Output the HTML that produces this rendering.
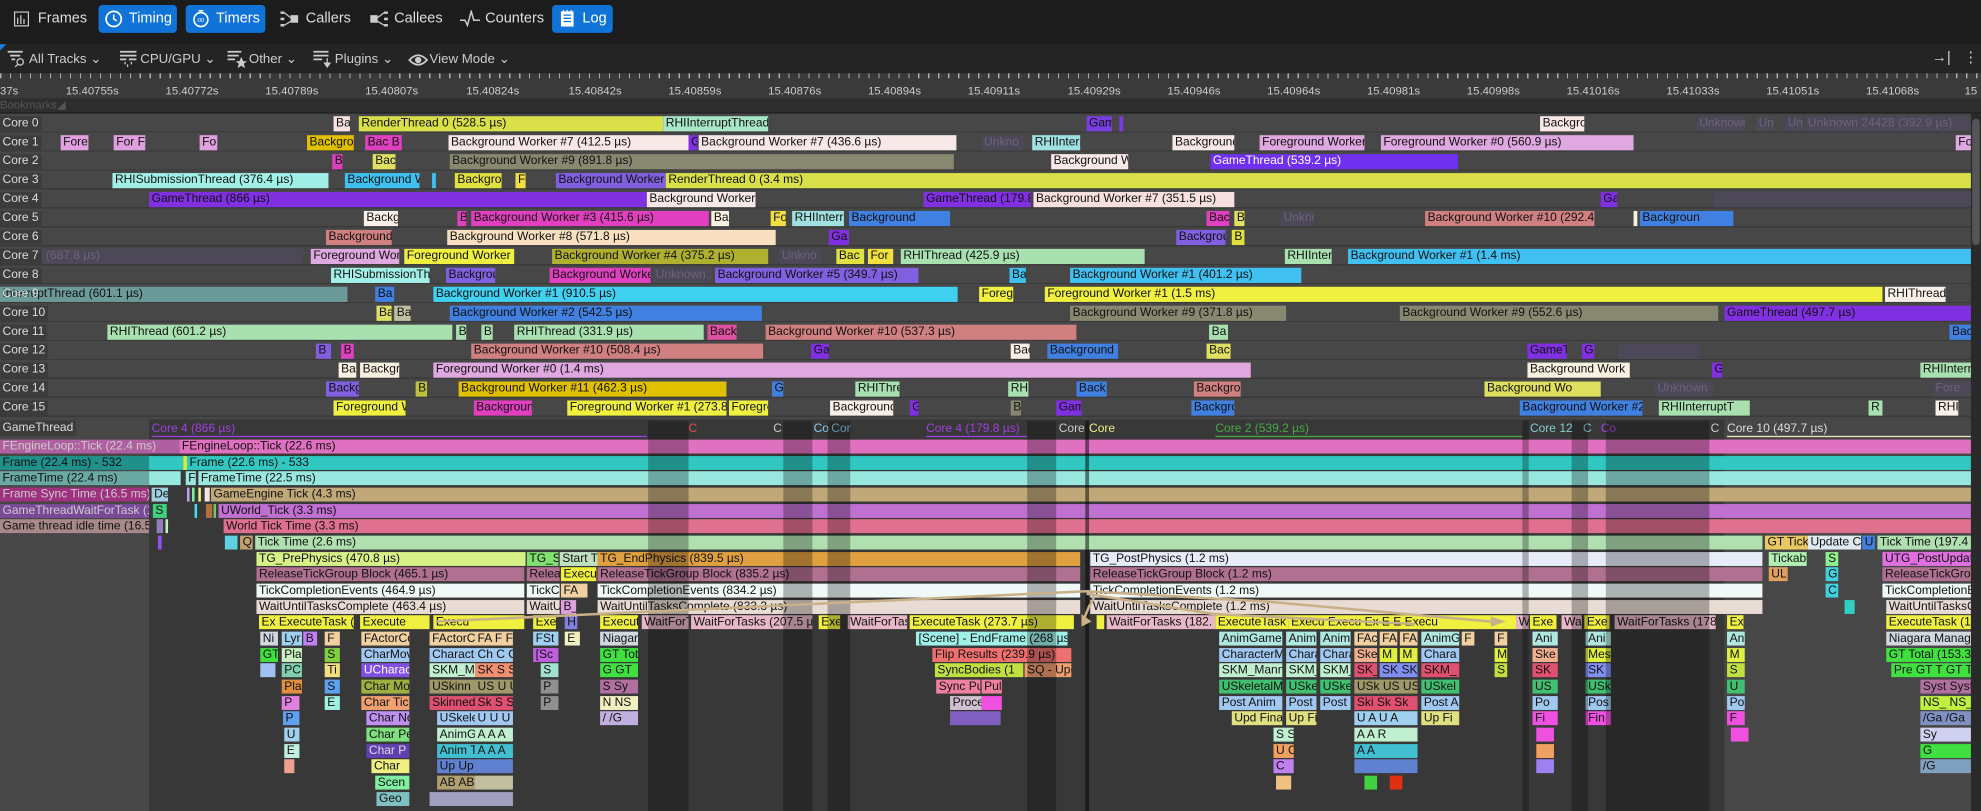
<!DOCTYPE html>
<html><head><meta charset="utf-8">
<style>
html,body{margin:0;padding:0;width:1981px;height:811px;overflow:hidden;background:#1c1c1c}
#c{position:absolute;left:0;top:0;width:1568px;height:642px;transform:scale(1.26339,1.2633);transform-origin:0 0;font-family:"Liberation Sans Narrow","Liberation Sans",sans-serif;overflow:hidden;background:#1c1c1c}
.a{position:absolute}
.b{position:absolute;height:11px;font-size:9.5px;line-height:11px;color:#111;overflow:hidden;white-space:nowrap;padding-left:2px;box-sizing:border-box}
.r{position:absolute;left:0;width:1560px;height:12px}
.r .b{top:0;height:12px;line-height:12px}
.d{color:#6a6478 !important;background:#4d4858}
.lbl{position:absolute;left:0;top:0;height:12px;line-height:12px;font-size:9.5px;color:#ddd;background:#3c3c3c;padding:0 2px}
.g{position:absolute;left:0;width:1560px;height:11px}
.tab{position:absolute;top:4px;height:22px;border-radius:3px;color:#ddd;font-size:11.5px;line-height:22px;padding-left:24px;box-sizing:border-box}
.tb{background:#1073d8;color:#fff}
.tl{position:absolute;top:39px;color:#ccc;font-size:10.5px;line-height:16px}
.rl{position:absolute;top:67px;color:#ccc;font-size:9px}
.ov{position:absolute;top:333px;height:309px;background:rgba(0,0,0,.28)}
</style></head><body><div id="c">
<!-- top bar -->
<div class="a" style="left:0;top:0;width:1568px;height:34px;background:#1c1c1c"></div>
<div class="tab" style="left:6px;width:64px">Frames</div>
<svg class="a" style="left:11px;top:9px" width="12" height="12"><rect x="0.5" y="0.5" width="11" height="11" fill="none" stroke="#ccc"/><path d="M3 10V5M5.5 10V3M8 10V6" stroke="#ccc"/></svg>
<div class="tab tb" style="left:78px;width:62px">Timing</div>
<svg class="a" style="left:83px;top:8px" width="14" height="14"><circle cx="7" cy="7" r="6" fill="none" stroke="#fff" stroke-width="1.4"/><path d="M7 3.5V7L9.5 8.5" stroke="#fff" fill="none" stroke-width="1.2"/></svg>
<div class="tab tb" style="left:147px;width:63px">Timers</div>
<svg class="a" style="left:152px;top:7px" width="14" height="15"><circle cx="7" cy="8.5" r="5.5" fill="none" stroke="#fff" stroke-width="1.3"/><path d="M5 1.5H9M7 1.5V3" stroke="#fff"/><text x="3.5" y="10.5" font-size="4.5" fill="#fff">:00</text></svg>
<div class="tab" style="left:218px;width:64px">Callers</div>
<svg class="a" style="left:222px;top:9px" width="15" height="12"><rect x="8" y="3" width="6" height="6" fill="#ccc"/><rect x="0" y="0" width="3" height="2" fill="#ccc"/><rect x="0" y="5" width="3" height="2" fill="#ccc"/><rect x="0" y="10" width="3" height="2" fill="#ccc"/><path d="M3 1L8 5M3 11L8 8" stroke="#ccc"/></svg>
<div class="tab" style="left:288px;width:64px">Callees</div>
<svg class="a" style="left:293px;top:9px" width="15" height="12"><rect x="0" y="3" width="6" height="6" fill="#ccc"/><rect x="11" y="0" width="3" height="2" fill="#ccc"/><rect x="11" y="5" width="3" height="2" fill="#ccc"/><rect x="11" y="10" width="3" height="2" fill="#ccc"/><path d="M6 5L11 1M6 8L11 11" stroke="#ccc"/></svg>
<div class="tab" style="left:360px;width:72px">Counters</div>
<svg class="a" style="left:364px;top:8px" width="16" height="14"><path d="M0 8H4L6 12L9 1L11 8H16" stroke="#ccc" fill="none" stroke-width="1.2"/></svg>
<div class="tab tb" style="left:437px;width:48px">Log</div>
<svg class="a" style="left:443px;top:7px" width="12" height="15"><rect x="1" y="2" width="10" height="12" fill="#fff"/><path d="M3 5H9M3 7.5H9M3 10H9" stroke="#1073d8"/><path d="M3 1V3M6 1V3M9 1V3" stroke="#fff"/></svg>
<!-- toolbar -->
<div class="a" style="left:0;top:35px;width:1568px;height:23px;background:#242424"></div>
<div class="a" style="left:0;top:35px;width:0;height:0;border-top:5px solid #1a7ee0;border-right:5px solid transparent"></div>
<svg class="a" style="left:6px;top:40px" width="16" height="14"><path d="M0 1H12M2 4H10M3 7H6" stroke="#ccc" stroke-width="1.4"/><circle cx="10" cy="9" r="2.5" fill="none" stroke="#ccc"/><path d="M8 11L6 13" stroke="#ccc"/></svg>
<div class="tl" style="left:23px">All Tracks ⌄</div>
<svg class="a" style="left:95px;top:40px" width="14" height="14"><path d="M0 1H13M0 4H13M0 7H5M7 7H13" stroke="#ccc" stroke-width="1.4"/><path d="M4 9V11M9 9V11M6 11V13" stroke="#ccc"/></svg>
<div class="tl" style="left:111px">CPU/GPU ⌄</div>
<svg class="a" style="left:180px;top:40px" width="16" height="14"><path d="M0 1H11M0 4H9M0 7H6" stroke="#ccc" stroke-width="1.4"/><path d="M11 5L12.5 8.5H15.5L13 10.5L14 14L11 12L8 14L9 10.5L6.5 8.5H9.5Z" fill="#ccc"/></svg>
<div class="tl" style="left:197px">Other ⌄</div>
<svg class="a" style="left:248px;top:40px" width="16" height="14"><path d="M0 1H12M0 4H12M0 7H7" stroke="#ccc" stroke-width="1.4"/><path d="M11 6V11M8.5 9.5L11 13L13.5 9.5" stroke="#ccc" fill="#ccc"/></svg>
<div class="tl" style="left:265px">Plugins ⌄</div>
<svg class="a" style="left:323px;top:42px" width="16" height="11"><path d="M1 5.5Q8 -2 15 5.5Q8 13 1 5.5Z" fill="none" stroke="#ccc" stroke-width="1.4"/><circle cx="8" cy="5.5" r="2.5" fill="#ccc"/></svg>
<div class="tl" style="left:340px">View Mode ⌄</div>
<div class="a" style="left:1529px;top:38px;color:#ccc;font-size:12px">→|</div>
<div class="a" style="left:1554px;top:38px;color:#ccc;font-size:12px">⋮</div>
<!-- ruler -->
<div class="a" style="left:0;top:58px;width:1568px;height:20px;background:#3a3a3a;background-image:repeating-linear-gradient(90deg,#aaa 0 1px,transparent 1px 7.9px);background-size:100% 4px;background-repeat:no-repeat"></div>
<div class="rl" style="left:0">37s</div><div class="rl" style="left:52px">15.40755s</div><div class="rl" style="left:131px">15.40772s</div><div class="rl" style="left:210px">15.40789s</div><div class="rl" style="left:289px">15.40807s</div><div class="rl" style="left:369px">15.40824s</div><div class="rl" style="left:450px">15.40842s</div><div class="rl" style="left:529px">15.40859s</div><div class="rl" style="left:608px">15.40876s</div><div class="rl" style="left:687px">15.40894s</div><div class="rl" style="left:766px">15.40911s</div><div class="rl" style="left:845px">15.40929s</div><div class="rl" style="left:924px">15.40946s</div><div class="rl" style="left:1003px">15.40964s</div><div class="rl" style="left:1082px">15.40981s</div><div class="rl" style="left:1161px">15.40998s</div><div class="rl" style="left:1240px">15.41016s</div><div class="rl" style="left:1319px">15.41033s</div><div class="rl" style="left:1398px">15.41051s</div><div class="rl" style="left:1477px">15.41068s</div><div class="rl" style="left:1555px">15</div>
<div class="a" style="left:0;top:78px;width:1568px;height:11px;background:#2e2e2e;color:#555;font-size:9px;line-height:11px">Bookmarks◢</div>
<!-- core area -->
<div class="a" style="left:0;top:90px;width:1568px;height:243px;background:#474747;background-image:repeating-linear-gradient(180deg,#474747 0 14px,#3a3a3a 14px 15px)"></div>
<div class="a" style="left:1560px;top:90px;width:8px;height:552px;background:#2a2a2a"></div>
<div class="a" style="left:1561px;top:94px;width:6px;height:100px;background:#555;border-radius:3px"></div>

<div class="r" style="top:92px"><div class="lbl">Core 0</div><div class="b" style="left:264px;width:13px;background:#f8e0e0">Ba</div><div class="b" style="left:284px;width:241px;background:#d9e04a">RenderThread 0 (528.5 µs)</div><div class="b" style="left:525px;width:83px;background:#a8e6c8">RHIInterruptThread (</div><div class="b" style="left:860px;width:20px;background:#7a3ee0">Gam</div><div class="b" style="left:886px;width:3px;background:#7a3ee0"></div><div class="b" style="left:1219px;width:35px;background:#f8e8e8">Backgro</div><div class="b d" style="left:1343px;width:38px">Unknown</div><div class="b d" style="left:1390px;width:14px">Un</div><div class="b d" style="left:1413px;width:14px">Un</div><div class="b d" style="left:1429px;width:131px">Unknown 24428 (392.9 µs)</div></div>
<div class="r" style="top:107px"><div class="lbl">Core 1</div><div class="b" style="left:48px;width:22px;background:#e0a0e0">Fore</div><div class="b" style="left:90px;width:25px;background:#e0a0e0">For F</div><div class="b" style="left:158px;width:14px;background:#e0a0e0">Fo</div><div class="b" style="left:243px;width:37px;background:#e0c000">Backgro</div><div class="b" style="left:289px;width:29px;background:#e040c0">Bac B</div><div class="b" style="left:355px;width:190px;background:#f8e8e8">Background Worker #7 (412.5 µs)</div><div class="b" style="left:545px;width:7px;background:#8030e0">G</div><div class="b" style="left:553px;width:204px;background:#f8e8e8">Background Worker #7 (436.6 µs)</div><div class="b d" style="left:777px;width:33px">Unkno</div><div class="b" style="left:817px;width:38px;background:#a0e0e0">RHIInterr</div><div class="b" style="left:928px;width:49px;background:#f8e8e8">Background</div><div class="b" style="left:997px;width:83px;background:#e0a8e0">Foreground Worker #</div><div class="b" style="left:1093px;width:200px;background:#e0a8e0">Foreground Worker #0 (560.9 µs)</div><div class="b" style="left:1548px;width:12px;background:#e0a8e0">Fore</div></div>
<div class="r" style="top:122px"><div class="lbl">Core 2</div><div class="b" style="left:263px;width:8px;background:#e040c0">B</div><div class="b" style="left:295px;width:18px;background:#e0e060">Bac</div><div class="b" style="left:356px;width:399px;background:#888870">Background Worker #9 (891.8 µs)</div><div class="b" style="left:832px;width:61px;background:#f8e8e8">Background W</div><div class="b" style="left:958px;width:196px;background:#7030f0;color:#fff">GameThread (539.2 µs)</div></div>
<div class="r" style="top:137px"><div class="lbl">Core 3</div><div class="b" style="left:89px;width:171px;background:#a0f0e8">RHISubmissionThread (376.4 µs)</div><div class="b" style="left:273px;width:59px;background:#40c0f0">Background W</div><div class="b" style="left:342px;width:3px;background:#40c0f0"></div><div class="b" style="left:360px;width:37px;background:#e0e040">Backgro</div><div class="b" style="left:408px;width:8px;background:#f0e040">F</div><div class="b" style="left:440px;width:87px;background:#8060e0">Background Worker #</div><div class="b" style="left:527px;width:1033px;background:#d9e04a">RenderThread 0 (3.4 ms)</div></div>
<div class="r" style="top:152px"><div class="lbl">Core 4</div><div class="b" style="left:118px;width:394px;background:#8030e0">GameThread (866 µs)</div><div class="b" style="left:512px;width:86px;background:#f8e8e8">Background Worker (</div><div class="b" style="left:731px;width:85px;background:#8030e0">GameThread (179.8</div><div class="b" style="left:818px;width:159px;background:#f8e0e0">Background Worker #7 (351.5 µs)</div><div class="b" style="left:1267px;width:13px;background:#8030e0">Ga</div><div class="b d" style="left:1356px;width:204px"></div></div>
<div class="r" style="top:167px"><div class="lbl">Core 5</div><div class="b" style="left:288px;width:27px;background:#f8f0e8">Backg</div><div class="b" style="left:362px;width:7px;background:#e040c0">B</div><div class="b" style="left:373px;width:188px;background:#e040c0">Background Worker #3 (415.6 µs)</div><div class="b" style="left:563px;width:14px;background:#f8f0e0">Ba</div><div class="b" style="left:610px;width:12px;background:#f0e040">Fo</div><div class="b" style="left:627px;width:41px;background:#a0e0e0">RHIInterr</div><div class="b" style="left:672px;width:80px;background:#4080e0">Background</div><div class="b" style="left:955px;width:18px;background:#e040c0">Bac</div><div class="b" style="left:977px;width:8px;background:#e0e060">B</div><div class="b d" style="left:1014px;width:26px">Unkno</div><div class="b" style="left:1128px;width:134px;background:#d08080">Background Worker #10 (292.4 µs)</div><div class="b" style="left:1293px;width:3px;background:#f8f0e0"></div><div class="b" style="left:1298px;width:74px;background:#4080e0">Backgroun</div></div>
<div class="r" style="top:182px"><div class="lbl">Core 6</div><div class="b" style="left:258px;width:52px;background:#d08080">Background</div><div class="b" style="left:354px;width:260px;background:#f8e0c0">Background Worker #8 (571.8 µs)</div><div class="b" style="left:656px;width:16px;background:#8030e0">Ga</div><div class="b" style="left:931px;width:39px;background:#8060e0">Backgrou</div><div class="b" style="left:975px;width:10px;background:#e0e040">B</div></div>
<div class="r" style="top:197px"><div class="b d" style="left:0;width:240px">m 1092 (687.8 µs)</div><div class="lbl">Core 7</div><div class="b" style="left:246px;width:70px;background:#e0a8e0">Foreground Work</div><div class="b" style="left:320px;width:87px;background:#f0f040">Foreground Worker #</div><div class="b" style="left:437px;width:171px;background:#b0b030">Background Worker #4 (375.2 µs)</div><div class="b d" style="left:617px;width:33px">Unkno</div><div class="b" style="left:662px;width:22px;background:#e0e040">Bac</div><div class="b" style="left:687px;width:20px;background:#f0e040">For</div><div class="b" style="left:713px;width:193px;background:#a8e0b0">RHIThread (425.9 µs)</div><div class="b" style="left:1017px;width:37px;background:#a8e0b0">RHIInter</div><div class="b" style="left:1067px;width:493px;background:#40c0f0">Background Worker #1 (1.4 ms)</div></div>
<div class="r" style="top:212px"><div class="lbl">Core 8</div><div class="b" style="left:262px;width:78px;background:#a0f0e8">RHISubmissionThre</div><div class="b" style="left:353px;width:39px;background:#8060e0">Backgrou</div><div class="b" style="left:435px;width:80px;background:#e040c0">Background Worker</div><div class="b d" style="left:517px;width:46px">Unknown 12</div><div class="b" style="left:566px;width:161px;background:#8060e0">Background Worker #5 (349.7 µs)</div><div class="b" style="left:799px;width:13px;background:#40c0f0">Ba</div><div class="b" style="left:847px;width:183px;background:#40c0f0">Background Worker #1 (401.2 µs)</div></div>
<div class="r" style="top:227px"><div class="b" style="left:0;width:275px;background:#6c9a98">InterruptThread (601.1 µs)</div><div class="lbl" style="background:none">Core 9</div><div class="b" style="left:297px;width:15px;background:#4080e0">Ba</div><div class="b" style="left:343px;width:415px;background:#40d0f0">Background Worker #1 (910.5 µs)</div><div class="b" style="left:775px;width:27px;background:#f0f040">Foregr</div><div class="b" style="left:827px;width:663px;background:#f0f040">Foreground Worker #1 (1.5 ms)</div><div class="b" style="left:1492px;width:48px;background:#f8f0e8">RHIThread</div></div>
<div class="r" style="top:242px"><div class="lbl">Core 10</div><div class="b" style="left:298px;width:12px;background:#e0e060">Ba</div><div class="b" style="left:312px;width:13px;background:#c0c0a0">Ba</div><div class="b" style="left:356px;width:247px;background:#4080e0">Background Worker #2 (542.5 µs)</div><div class="b" style="left:847px;width:171px;background:#888870">Background Worker #9 (371.8 µs)</div><div class="b" style="left:1108px;width:252px;background:#888870">Background Worker #9 (552.6 µs)</div><div class="b" style="left:1365px;width:195px;background:#8030e0">GameThread (497.7 µs)</div></div>
<div class="r" style="top:257px"><div class="lbl">Core 11</div><div class="b" style="left:85px;width:273px;background:#a8e0b0">RHIThread (601.2 µs)</div><div class="b" style="left:361px;width:8px;background:#a8e0b0">B</div><div class="b" style="left:381px;width:9px;background:#a8e0b0">B</div><div class="b" style="left:407px;width:150px;background:#a8e0b0">RHIThread (331.9 µs)</div><div class="b" style="left:560px;width:23px;background:#e050a0">Back</div><div class="b" style="left:606px;width:246px;background:#d08080">Background Worker #10 (537.3 µs)</div><div class="b" style="left:957px;width:15px;background:#a8e0b0">Ba</div><div class="b" style="left:1543px;width:17px;background:#4080e0">Bac</div></div>
<div class="r" style="top:272px"><div class="lbl">Core 12</div><div class="b" style="left:250px;width:12px;background:#8060e0">B</div><div class="b" style="left:270px;width:10px;background:#e040c0">B</div><div class="b" style="left:373px;width:231px;background:#d08080">Background Worker #10 (508.4 µs)</div><div class="b" style="left:642px;width:14px;background:#8030e0">Ga</div><div class="b" style="left:800px;width:15px;background:#f8f0e8">Bac</div><div class="b" style="left:829px;width:56px;background:#4080e0">Background</div><div class="b" style="left:955px;width:19px;background:#e0e060">Bac</div><div class="b" style="left:1209px;width:31px;background:#8030e0">GameT</div><div class="b" style="left:1252px;width:10px;background:#8030e0">G</div><div class="b d" style="left:1281px;width:64px"></div></div>
<div class="r" style="top:287px"><div class="lbl">Core 13</div><div class="b" style="left:268px;width:14px;background:#f8f0e0">Ba</div><div class="b" style="left:285px;width:31px;background:#f8f0e0">Backgr</div><div class="b" style="left:343px;width:647px;background:#e0a8e0">Foreground Worker #0 (1.4 ms)</div><div class="b" style="left:1209px;width:81px;background:#f8f0e0">Background Work</div><div class="b" style="left:1355px;width:8px;background:#8030e0">G</div><div class="b" style="left:1520px;width:40px;background:#a8e0b0">RHIInterr</div></div>
<div class="r" style="top:302px"><div class="lbl">Core 14</div><div class="b" style="left:258px;width:26px;background:#8060e0">Backg</div><div class="b" style="left:329px;width:9px;background:#c0c040">B</div><div class="b" style="left:363px;width:212px;background:#e0c000">Background Worker #11 (462.3 µs)</div><div class="b" style="left:611px;width:9px;background:#4080e0">G</div><div class="b" style="left:677px;width:35px;background:#a8e0b0">RHIThre</div><div class="b" style="left:798px;width:16px;background:#a8e0b0">RH</div><div class="b" style="left:852px;width:24px;background:#4080e0">Back</div><div class="b" style="left:945px;width:37px;background:#d08080">Backgro</div><div class="b" style="left:1175px;width:92px;background:#e0e060">Background Wo</div><div class="b d" style="left:1310px;width:46px">Unknown</div><div class="b d" style="left:1530px;width:30px">Fore</div></div>
<div class="r" style="top:317px"><div class="lbl">Core 15</div><div class="b" style="left:264px;width:57px;background:#f0f040">Foreground W</div><div class="b" style="left:375px;width:46px;background:#e040c0">Backgroun</div><div class="b" style="left:449px;width:126px;background:#f0f040">Foreground Worker #1 (273.8 µs)</div><div class="b" style="left:577px;width:31px;background:#f0f040">Foregro</div><div class="b" style="left:657px;width:50px;background:#f8f0e8">Background</div><div class="b" style="left:720px;width:7px;background:#8030e0">G</div><div class="b" style="left:800px;width:8px;background:#888870">B</div><div class="b" style="left:836px;width:20px;background:#8030e0">Gam</div><div class="b" style="left:943px;width:34px;background:#4080e0">Backgro</div><div class="b" style="left:1203px;width:97px;background:#4080e0">Background Worker #2 (</div><div class="b" style="left:1313px;width:72px;background:#a8e0b0">RHIInterruptT</div><div class="b" style="left:1479px;width:11px;background:#a8e0b0">R</div><div class="b" style="left:1532px;width:18px;background:#f8f0e8">RHI</div></div>

<!-- GameThread area -->
<div class="a" style="left:0;top:332px;width:1560px;height:310px;background:#383838"></div>
<div class="a" style="left:0;top:332px;width:118px;height:310px;background:#474747"></div>
<div class="a" style="left:1365px;top:332px;width:195px;height:310px;background:#474747"></div>
<div class="a" style="left:0;top:333px;height:12px;line-height:12px;font-size:9.5px;color:#ddd;background:#3c3c3c;padding:0 2px">GameThread</div>
<div class="a" style="left:120px;top:334px;font-size:9.5px;color:#a040e0">Core 4 (866 µs)</div>
<div class="a" style="left:120px;top:345px;width:392px;height:1px;background:#a040e0"></div>
<div class="a" style="left:545px;top:334px;font-size:9.5px;color:#e05050">C</div>
<div class="a" style="left:612px;top:334px;font-size:9.5px;color:#ccc">C</div>
<div class="a" style="left:644px;top:334px;font-size:9.5px;color:#8ce">Co</div><div class="a" style="left:658px;top:334px;font-size:9.5px;color:#8ce">Cor</div>
<div class="a" style="left:733px;top:334px;font-size:9.5px;color:#a040e0">Core 4 (179.8 µs)</div>
<div class="a" style="left:733px;top:345px;width:80px;height:1px;background:#a040e0"></div>
<div class="a" style="left:838px;top:334px;font-size:9.5px;color:#ccc">Core</div><div class="a" style="left:862px;top:334px;font-size:9.5px;color:#ee8">Core</div>
<div class="a" style="left:962px;top:334px;font-size:9.5px;color:#4a4">Core 2 (539.2 µs)</div>
<div class="a" style="left:962px;top:345px;width:243px;height:1px;background:#4a4"></div>
<div class="a" style="left:1211px;top:334px;font-size:9.5px;color:#8cc">Core 12</div>
<div class="a" style="left:1253px;top:334px;font-size:9.5px;color:#8cc">C</div><div class="a" style="left:1267px;top:334px;font-size:9.5px;color:#a4e">Co</div>
<div class="a" style="left:1354px;top:334px;font-size:9.5px;color:#ccc">C</div>
<div class="a" style="left:1367px;top:334px;font-size:9.5px;color:#ddd">Core 10 (497.7 µs)</div>
<div class="a" style="left:1367px;top:345px;width:193px;height:1px;background:#eee8c0"></div>

<div class="g" style="top:348px"><div class="b" style="left:0;width:142px;background:#b060a0;color:#ccc">FEngineLoop::Tick (22.4 ms)</div><div class="b" style="left:142px;width:1418px;background:#e070c0">FEngineLoop::Tick (22.6 ms)</div></div>
<div class="g" style="top:361px"><div class="b" style="left:0;width:118px;background:#20908a">Frame (22.4 ms) -  532</div><div class="b" style="left:118px;width:27px;background:#30c8c0"></div><div class="b" style="left:145px;width:3px;background:#d0f040"></div><div class="b" style="left:148px;width:1412px;background:#30c8c0">Frame (22.6 ms) -  533</div></div>
<div class="g" style="top:373px"><div class="b" style="left:0;width:118px;background:#6aa8a2">FrameTime (22.4 ms)</div><div class="b" style="left:118px;width:25px;background:#98e8e0"></div><div class="b" style="left:147px;width:8px;background:#98e8e0">F</div><div class="b" style="left:157px;width:1403px;background:#98e8e0">FrameTime (22.5 ms)</div></div>
<div class="g" style="top:386px"><div class="b" style="left:0;width:118px;background:#a03080;color:#ccc">Frame Sync Time (16.5 ms)</div><div class="b" style="left:120px;width:13px;background:#a0d0e0">De</div><div class="b" style="left:148px;width:2px;background:#c0a0f0"></div><div class="b" style="left:152px;width:2px;background:#80f0a0"></div><div class="b" style="left:157px;width:2px;background:#f0f080"></div><div class="b" style="left:162px;width:4px;background:#f0e8e0"></div><div class="b" style="left:167px;width:1393px;background:#c0a878">GameEngine Tick (4.3 ms)</div></div>
<div class="g" style="top:399px"><div class="b" style="left:0;width:118px;background:#7a4a98;color:#ccc">GameThreadWaitForTask (16.</div><div class="b" style="left:121px;width:11px;background:#40d080">S</div><div class="b" style="left:154px;width:2px;background:#40e0f0"></div><div class="b" style="left:163px;width:5px;background:#b07040"></div><div class="b" style="left:169px;width:2px;background:#80c060"></div><div class="b" style="left:173px;width:1387px;background:#c070d0">UWorld_Tick (3.3 ms)</div></div>
<div class="g" style="top:411px"><div class="b" style="left:0;width:118px;background:#a88888">Game thread idle time (16.5 m</div><div class="b" style="left:124px;width:5px;background:#9080c0"></div><div class="b" style="left:131px;width:2px;background:#c0f0c0"></div><div class="b" style="left:177px;width:1383px;background:#e07090">World Tick Time (3.3 ms)</div></div>
<div class="g" style="top:424px"><div class="b" style="left:125px;width:3px;background:#9050f0"></div><div class="b" style="left:178px;width:10px;background:#60d0e0"></div><div class="b" style="left:190px;width:10px;background:#c0a070">Q</div><div class="b" style="left:202px;width:1193px;background:#b0e0b0">Tick Time (2.6 ms)</div><div class="b" style="left:1397px;width:34px;background:#e8c860">GT Tick</div><div class="b" style="left:1431px;width:42px;background:#e0e8f0">Update Ca</div><div class="b" style="left:1474px;width:10px;background:#4080e0">U</div><div class="b" style="left:1486px;width:74px;background:#b0e0b0">Tick Time (197.4</div></div>
<div class="g" style="top:437px"><div class="b" style="left:203px;width:213px;background:#d8f088">TG_PrePhysics (470.8 µs)</div><div class="b" style="left:417px;width:25px;background:#80e070">TG_St</div><div class="b" style="left:443px;width:30px;background:#c0e0c0">Start T</div><div class="b" style="left:473px;width:382px;background:#e0a040">TG_EndPhysics (839.5 µs)</div><div class="b" style="left:863px;width:532px;background:#e8ecf8">TG_PostPhysics (1.2 ms)</div><div class="b" style="left:1400px;width:30px;background:#b0f0b0">Tickabl</div><div class="b" style="left:1445px;width:10px;background:#90f090">S</div><div class="b" style="left:1490px;width:70px;background:#e070e0">UTG_PostUpdateW</div></div>
<div class="g" style="top:449px"><div class="b" style="left:203px;width:212px;background:#b07090">ReleaseTickGroup Block (465.1 µs)</div><div class="b" style="left:417px;width:26px;background:#b07090">Relea</div><div class="b" style="left:444px;width:28px;background:#f0f040">Execut</div><div class="b" style="left:473px;width:382px;background:#b07090">ReleaseTickGroup Block (835.2 µs)</div><div class="b" style="left:863px;width:532px;background:#b07090">ReleaseTickGroup Block (1.2 ms)</div><div class="b" style="left:1400px;width:15px;background:#e0a060">UL</div><div class="b" style="left:1445px;width:10px;background:#40d0e0">G</div><div class="b" style="left:1490px;width:70px;background:#b07090">ReleaseTickGrou</div></div>
<div class="g" style="top:462px"><div class="b" style="left:203px;width:212px;background:#f0f8f8">TickCompletionEvents (464.9 µs)</div><div class="b" style="left:417px;width:26px;background:#f0f8f8">TickC</div><div class="b" style="left:444px;width:21px;background:#f0d0a0">FA</div><div class="b" style="left:473px;width:382px;background:#f0f8f8">TickCompletionEvents (834.2 µs)</div><div class="b" style="left:863px;width:532px;background:#f0f8f8">TickCompletionEvents (1.2 ms)</div><div class="b" style="left:1445px;width:10px;background:#40d0e0">C</div><div class="b" style="left:1490px;width:70px;background:#f0f8f8">TickCompletionE</div></div>
<div class="g" style="top:475px"><div class="b" style="left:203px;width:212px;background:#e8dcd4">WaitUntilTasksComplete (463.4 µs)</div><div class="b" style="left:417px;width:26px;background:#e8dcd4">WaitU</div><div class="b" style="left:444px;width:12px;background:#e0a0e0">B_</div><div class="b" style="left:473px;width:382px;background:#e8dcd4">WaitUntilTasksComplete (833.3 µs)</div><div class="b" style="left:863px;width:532px;background:#e8dcd4">WaitUntilTasksComplete (1.2 ms)</div><div class="b" style="left:1460px;width:8px;background:#30d0c0"></div><div class="b" style="left:1493px;width:67px;background:#e8dcd4">WaitUntilTasksC</div></div>
<div class="g" style="top:487px"><div class="b" style="left:205px;width:75px;background:#f0f040">Ex ExecuteTask (1</div><div class="b" style="left:285px;width:55px;background:#f0f040">Execute</div><div class="b" style="left:343px;width:72px;background:#f0f040">Execu</div><div class="b" style="left:422px;width:18px;background:#f0f040">Exe</div><div class="b" style="left:447px;width:10px;background:#8080e0">H</div><div class="b" style="left:475px;width:30px;background:#f0f040">Execut</div><div class="b" style="left:508px;width:37px;background:#e8b8c8">WaitForT</div><div class="b" style="left:547px;width:96px;background:#e8b8c8">WaitForTasks (207.5 µ</div><div class="b" style="left:648px;width:17px;background:#f0f040">Exe</div><div class="b" style="left:671px;width:47px;background:#e8b8c8">WaitForTas</div><div class="b" style="left:720px;width:130px;background:#f0f040">ExecuteTask (273.7 µs)</div><div class="b" style="left:868px;width:6px;background:#f0f040"></div><div class="b" style="left:876px;width:86px;background:#e8b8c8">WaitForTasks (182.</div><div class="b" style="left:962px;width:58px;background:#f0f040">ExecuteTask</div><div class="b" style="left:1020px;width:180px;background:#f0f040">Execu Execu Ex E E Execu</div><div class="b" style="left:1200px;width:10px;background:#e8b8c8">W</div><div class="b" style="left:1211px;width:21px;background:#f0f040">Exe</div><div class="b" style="left:1236px;width:16px;background:#e8b8c8">Wai</div><div class="b" style="left:1254px;width:20px;background:#f0f040">Exe</div><div class="b" style="left:1278px;width:80px;background:#e8b8c8">WaitForTasks (178.</div><div class="b" style="left:1367px;width:13px;background:#f0f040">Ex</div><div class="b" style="left:1493px;width:67px;background:#f0f040">ExecuteTask (1</div></div>

<!-- lower rows -->
<div class="g" style="top:500px"><div class="b" style="left:206px;width:14px;background:#d0d8e0">Ni</div><div class="b" style="left:223px;width:16px;background:#a0d0f0">Lyr</div><div class="b" style="left:240px;width:11px;background:#c080f0">B</div><div class="b" style="left:257px;width:12px;background:#f0d0a0">F</div><div class="b" style="left:286px;width:38px;background:#f0d0a0">FActorCo</div><div class="b" style="left:340px;width:36px;background:#f0d0a0">FActorC</div><div class="b" style="left:376px;width:30px;background:#f0d0a0">FA F F</div><div class="b" style="left:422px;width:20px;background:#a0d0f0">FSt</div><div class="b" style="left:447px;width:12px;background:#f0f0c0">E</div><div class="b" style="left:475px;width:30px;background:#d0d8e0">Niagar</div><div class="b" style="left:725px;width:120px;background:#a0f0e8">[Scene] - EndFrame (268 µs)</div><div class="b" style="left:965px;width:50px;background:#b0e8e0">AnimGameT</div><div class="b" style="left:1018px;width:24px;background:#b0e8e0">Anim</div><div class="b" style="left:1045px;width:24px;background:#b0e8e0">Anim</div><div class="b" style="left:1072px;width:18px;background:#f0d0a0">FAc</div><div class="b" style="left:1092px;width:14px;background:#f0d0a0">FA</div><div class="b" style="left:1108px;width:14px;background:#f0d0a0">FA</div><div class="b" style="left:1125px;width:30px;background:#b0e8e0">AnimG</div><div class="b" style="left:1157px;width:10px;background:#f0d0a0">F</div><div class="b" style="left:1183px;width:10px;background:#f0d0a0">F</div><div class="b" style="left:1213px;width:20px;background:#b0e8e0">Ani</div><div class="b" style="left:1255px;width:20px;background:#b0e8e0">Ani</div><div class="b" style="left:1367px;width:14px;background:#b0e8e0">An</div><div class="b" style="left:1493px;width:67px;background:#d0d8e0">Niagara Manage</div></div>
<div class="g" style="top:513px"><div class="b" style="left:206px;width:14px;background:#40e040">GT</div><div class="b" style="left:223px;width:16px;background:#c8f0c0">Pla</div><div class="b" style="left:257px;width:12px;background:#80d040">S</div><div class="b" style="left:286px;width:38px;background:#a0c8f0">CharMov</div><div class="b" style="left:340px;width:36px;background:#a0c8f0">Charact</div><div class="b" style="left:376px;width:30px;background:#a0c8f0">Ch C C</div><div class="b" style="left:422px;width:20px;background:#c060e0">[Sc</div><div class="b" style="left:475px;width:30px;background:#40e040">GT Tot</div><div class="b" style="left:738px;width:110px;background:#f07070">Flip Results (239.9 µs)</div><div class="b" style="left:965px;width:50px;background:#a0c8f0">CharacterM</div><div class="b" style="left:1018px;width:24px;background:#a0c8f0">Chara</div><div class="b" style="left:1045px;width:24px;background:#a0c8f0">Chara</div><div class="b" style="left:1072px;width:18px;background:#f0b090">Ske</div><div class="b" style="left:1092px;width:14px;background:#e0f040">M</div><div class="b" style="left:1108px;width:14px;background:#e0f040">M</div><div class="b" style="left:1125px;width:30px;background:#a0c8f0">Chara</div><div class="b" style="left:1183px;width:10px;background:#e0f040">M</div><div class="b" style="left:1213px;width:20px;background:#f0b090">Ske</div><div class="b" style="left:1255px;width:20px;background:#e0f040">Mes</div><div class="b" style="left:1367px;width:14px;background:#e0f040">M</div><div class="b" style="left:1493px;width:67px;background:#40e040">GT Total (153.3</div></div>
<div class="g" style="top:525px"><div class="b" style="left:206px;width:12px;background:#a0c0f0"></div><div class="b" style="left:223px;width:16px;background:#80d0b0">PC</div><div class="b" style="left:257px;width:12px;background:#f0e080">Ti</div><div class="b" style="left:286px;width:38px;background:#8050e0;color:#fff">UCharac</div><div class="b" style="left:340px;width:36px;background:#c0f0d0">SKM_M</div><div class="b" style="left:376px;width:30px;background:#f09070">SK S S</div><div class="b" style="left:428px;width:14px;background:#a0e0d0">S</div><div class="b" style="left:475px;width:30px;background:#40e040">G GT</div><div class="b" style="left:740px;width:70px;background:#c0e040">SyncBodies (1</div><div class="b" style="left:811px;width:37px;background:#f0a070">SQ - Upda</div><div class="b" style="left:965px;width:50px;background:#c0f0d0">SKM_Mann</div><div class="b" style="left:1018px;width:24px;background:#c0f0d0">SKM_</div><div class="b" style="left:1045px;width:24px;background:#c0f0d0">SKM_</div><div class="b" style="left:1072px;width:18px;background:#e05070">SK_</div><div class="b" style="left:1092px;width:30px;background:#8090f0">SK SK</div><div class="b" style="left:1125px;width:30px;background:#e05070">SKM_</div><div class="b" style="left:1183px;width:10px;background:#c0e040">S</div><div class="b" style="left:1213px;width:20px;background:#e05070">SK</div><div class="b" style="left:1255px;width:20px;background:#8090f0">SK</div><div class="b" style="left:1367px;width:14px;background:#c0e040">S</div><div class="b" style="left:1497px;width:63px;background:#40e040">Pre GT T GT T</div></div>
<div class="g" style="top:538px"><div class="b" style="left:223px;width:16px;background:#e09040">Pla</div><div class="b" style="left:257px;width:12px;background:#60a0f0">S</div><div class="b" style="left:286px;width:38px;background:#a0b040">Char Mo</div><div class="b" style="left:340px;width:36px;background:#a09868">USkinn</div><div class="b" style="left:376px;width:30px;background:#a09868">US U U</div><div class="b" style="left:428px;width:14px;background:#909090">P</div><div class="b" style="left:475px;width:30px;background:#b070a0">S Sy</div><div class="b" style="left:741px;width:35px;background:#f080a0">Sync Pul</div><div class="b" style="left:777px;width:16px;background:#f080a0">Pul</div><div class="b" style="left:965px;width:50px;background:#40c070">USkeletalM</div><div class="b" style="left:1018px;width:24px;background:#40c070">USkel</div><div class="b" style="left:1045px;width:24px;background:#40c070">USkel</div><div class="b" style="left:1072px;width:50px;background:#a09868">USk US US</div><div class="b" style="left:1125px;width:30px;background:#40c070">USkel</div><div class="b" style="left:1213px;width:20px;background:#40c070">US</div><div class="b" style="left:1255px;width:20px;background:#40c070">USk</div><div class="b" style="left:1367px;width:14px;background:#40c070">U</div><div class="b" style="left:1520px;width:40px;background:#b070a0">Syst Syst</div></div>
<div class="g" style="top:551px"><div class="b" style="left:223px;width:14px;background:#e080e0">P</div><div class="b" style="left:257px;width:12px;background:#a0f0e0">E</div><div class="b" style="left:286px;width:38px;background:#f0a070">Char Tic</div><div class="b" style="left:340px;width:36px;background:#e05070">Skinned</div><div class="b" style="left:376px;width:30px;background:#e05070">Sk S S</div><div class="b" style="left:428px;width:14px;background:#909090">P</div><div class="b" style="left:475px;width:30px;background:#f0f0c0">N NS</div><div class="b" style="left:752px;width:25px;background:#d0c0d0">Proce</div><div class="b" style="left:777px;width:16px;background:#f050e0"></div><div class="b" style="left:965px;width:50px;background:#a0c8f0">Post Anim</div><div class="b" style="left:1018px;width:24px;background:#a0c8f0">Post</div><div class="b" style="left:1045px;width:24px;background:#a0c8f0">Post</div><div class="b" style="left:1072px;width:50px;background:#e05070">Ski Sk Sk</div><div class="b" style="left:1125px;width:30px;background:#a0c8f0">Post A</div><div class="b" style="left:1213px;width:20px;background:#a0c8f0">Po</div><div class="b" style="left:1255px;width:20px;background:#a0c8f0">Pos</div><div class="b" style="left:1367px;width:14px;background:#a0c8f0">Po</div><div class="b" style="left:1520px;width:40px;background:#c0f040">NS_ NS_</div></div>
<div class="g" style="top:563px"><div class="b" style="left:224px;width:13px;background:#60a0f0">P</div><div class="b" style="left:290px;width:34px;background:#c090f0">Char No</div><div class="b" style="left:346px;width:30px;background:#a0c8f0">USkele</div><div class="b" style="left:376px;width:30px;background:#a0c8f0">U U U</div><div class="b" style="left:475px;width:30px;background:#c0b0e0">/ /G</div><div class="b" style="left:752px;width:40px;background:#8060c0"></div><div class="b" style="left:975px;width:40px;background:#e0e080">Upd Final</div><div class="b" style="left:1018px;width:24px;background:#e0e080">Up Fi</div><div class="b" style="left:1072px;width:50px;background:#a0d0f0">U A U A</div><div class="b" style="left:1125px;width:30px;background:#e0e080">Up Fi</div><div class="b" style="left:1213px;width:20px;background:#f050e0">Fi</div><div class="b" style="left:1255px;width:20px;background:#f050e0">Fin</div><div class="b" style="left:1367px;width:14px;background:#f050e0">F</div><div class="b" style="left:1520px;width:40px;background:#8090c0">/Ga /Ga</div></div>
<div class="g" style="top:576px"><div class="b" style="left:225px;width:12px;background:#a0d0f0">U</div><div class="b" style="left:290px;width:34px;background:#80e080">Char Pe</div><div class="b" style="left:346px;width:30px;background:#c0f0d0">AnimG</div><div class="b" style="left:376px;width:30px;background:#c0f0d0">A A A</div><div class="b" style="left:1008px;width:16px;background:#c0f0d0">S S</div><div class="b" style="left:1072px;width:50px;background:#c0f0d0">A A R</div><div class="b" style="left:1216px;width:14px;background:#f050e0"></div><div class="b" style="left:1370px;width:14px;background:#f050e0"></div><div class="b" style="left:1520px;width:40px;background:#d0d0f0">Sy</div></div>
<div class="g" style="top:589px"><div class="b" style="left:225px;width:12px;background:#c0f0e0">E</div><div class="b" style="left:290px;width:34px;background:#6040b0;color:#ddd">Char P</div><div class="b" style="left:346px;width:30px;background:#40c0d0">Anim T</div><div class="b" style="left:376px;width:30px;background:#40c0d0">A A A</div><div class="b" style="left:1008px;width:16px;background:#f0a060">U C</div><div class="b" style="left:1072px;width:50px;background:#40c0d0">A A</div><div class="b" style="left:1216px;width:14px;background:#f0a060"></div><div class="b" style="left:1520px;width:40px;background:#40e040">G</div></div>
<div class="g" style="top:601px"><div class="b" style="left:225px;width:8px;background:#f0a090"></div><div class="b" style="left:294px;width:30px;background:#f0f080">Char</div><div class="b" style="left:346px;width:30px;background:#6080d0">Up Up</div><div class="b" style="left:376px;width:30px;background:#6080d0"></div><div class="b" style="left:1008px;width:16px;background:#c080f0">C</div><div class="b" style="left:1072px;width:50px;background:#6080d0"></div><div class="b" style="left:1216px;width:14px;background:#a080f0"></div><div class="b" style="left:1520px;width:40px;background:#80a0c0">/G</div></div>
<div class="g" style="top:614px"><div class="b" style="left:297px;width:27px;background:#80f0a0">Scen</div><div class="b" style="left:346px;width:30px;background:#b0a070">AB AB</div><div class="b" style="left:376px;width:30px;background:#c0c0a0"></div><div class="b" style="left:1010px;width:12px;background:#f0c080"></div><div class="b" style="left:1080px;width:10px;background:#40d040"></div><div class="b" style="left:1100px;width:10px;background:#e03010"></div></div>
<div class="g" style="top:627px"><div class="b" style="left:298px;width:26px;background:#80c0c0">Geo</div><div class="b" style="left:340px;width:66px;background:#a0a0c0"></div></div>
<!-- dark overlays -->
<div class="ov" style="left:513px;width:32px"></div><div class="ov" style="left:620px;width:23px"></div><div class="ov" style="left:655px;width:18px"></div><div class="ov" style="left:813px;width:23px"></div><div class="ov" style="left:859px;width:3px;background:rgba(0,0,0,.5)"></div><div class="ov" style="left:1205px;width:5px"></div><div class="ov" style="left:1244px;width:13px"></div><div class="ov" style="left:1271px;width:82px"></div>
<!-- arrows -->
<svg class="a" style="left:0;top:0" width="1568" height="642"><g fill="none" stroke="#c8b088" stroke-width="2"><path d="M345 492L860 468Q870 470 862 480L858 490"/><path d="M860 468L1000 476L1180 492"/><path d="M860 470L960 486L1120 494"/></g><path d="M1180 488L1192 492L1180 496Z" fill="#c8b088"/><path d="M856 486L864 492L856 496Z" fill="#c8b088"/></svg>
</div></body></html>
